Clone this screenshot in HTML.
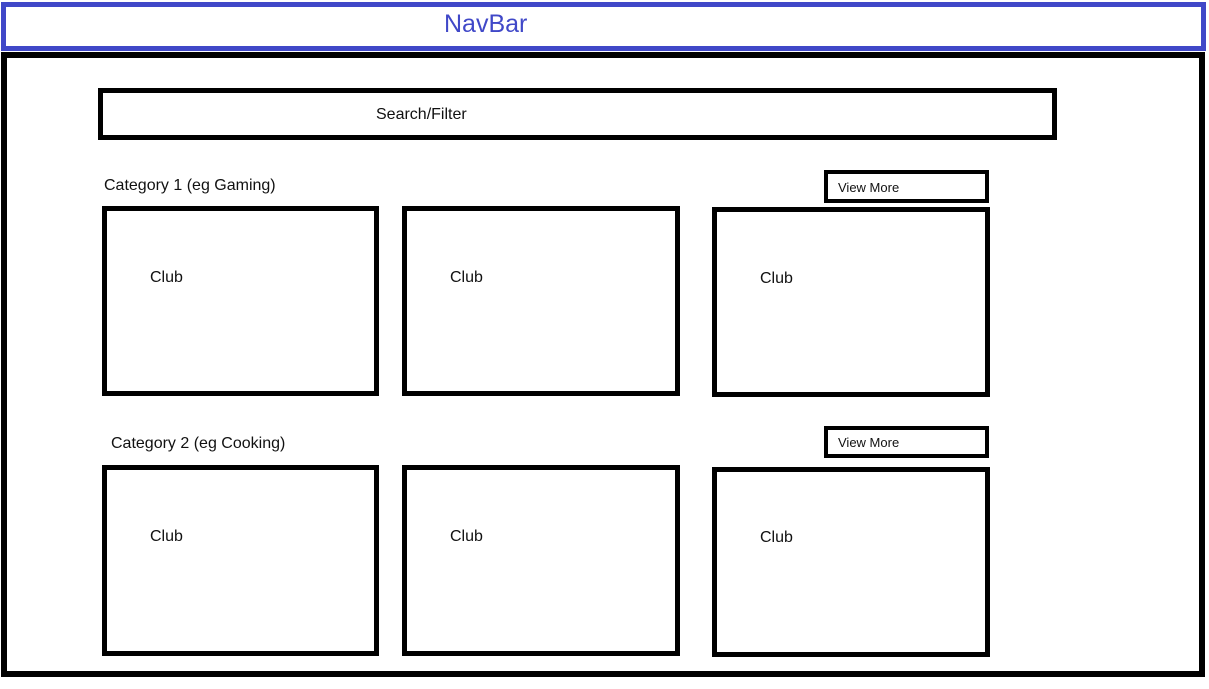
<!DOCTYPE html>
<html><head><meta charset="utf-8"><style>
body{margin:0;width:1209px;height:689px;background:#fff;position:relative;overflow:hidden;font-family:"Liberation Sans",sans-serif;}
.b{position:absolute;box-sizing:border-box;border:5px solid #000;background:#fff;}
.t{position:absolute;white-space:nowrap;color:#111;}
</style></head><body>
<div class="b" style="left:1px;top:2px;width:1205px;height:49px;border:5px solid #4048c8;"></div>
<div class="t" style="left:444px;top:10px;font-size:25px;color:#4048c8;">NavBar</div>
<div class="b" style="left:1px;top:52px;width:1204px;height:625px;border-width:6px;"></div>
<div class="b" style="left:98px;top:88px;width:959px;height:52px;"></div>
<div class="t" style="left:376px;top:106px;font-size:16px;">Search/Filter</div>

<div class="t" style="left:104px;top:177px;font-size:16px;">Category 1 (eg Gaming)</div>
<div class="b" style="left:824px;top:170px;width:165px;height:33px;border-width:4px;"></div>
<div class="t" style="left:838px;top:180px;font-size:13px;">View More</div>
<div class="b" style="left:102px;top:206px;width:277px;height:190px;"></div>
<div class="b" style="left:402px;top:206px;width:278px;height:190px;"></div>
<div class="b" style="left:712px;top:207px;width:278px;height:190px;"></div>
<div class="t" style="left:150px;top:269px;font-size:16px;">Club</div>
<div class="t" style="left:450px;top:269px;font-size:16px;">Club</div>
<div class="t" style="left:760px;top:270px;font-size:16px;">Club</div>

<div class="t" style="left:111px;top:435px;font-size:16px;">Category 2 (eg Cooking)</div>
<div class="b" style="left:824px;top:426px;width:165px;height:32px;border-width:4px;"></div>
<div class="t" style="left:838px;top:435px;font-size:13px;">View More</div>
<div class="b" style="left:102px;top:465px;width:277px;height:191px;"></div>
<div class="b" style="left:402px;top:465px;width:278px;height:191px;"></div>
<div class="b" style="left:712px;top:467px;width:278px;height:190px;"></div>
<div class="t" style="left:150px;top:528px;font-size:16px;">Club</div>
<div class="t" style="left:450px;top:528px;font-size:16px;">Club</div>
<div class="t" style="left:760px;top:529px;font-size:16px;">Club</div>
</body></html>
